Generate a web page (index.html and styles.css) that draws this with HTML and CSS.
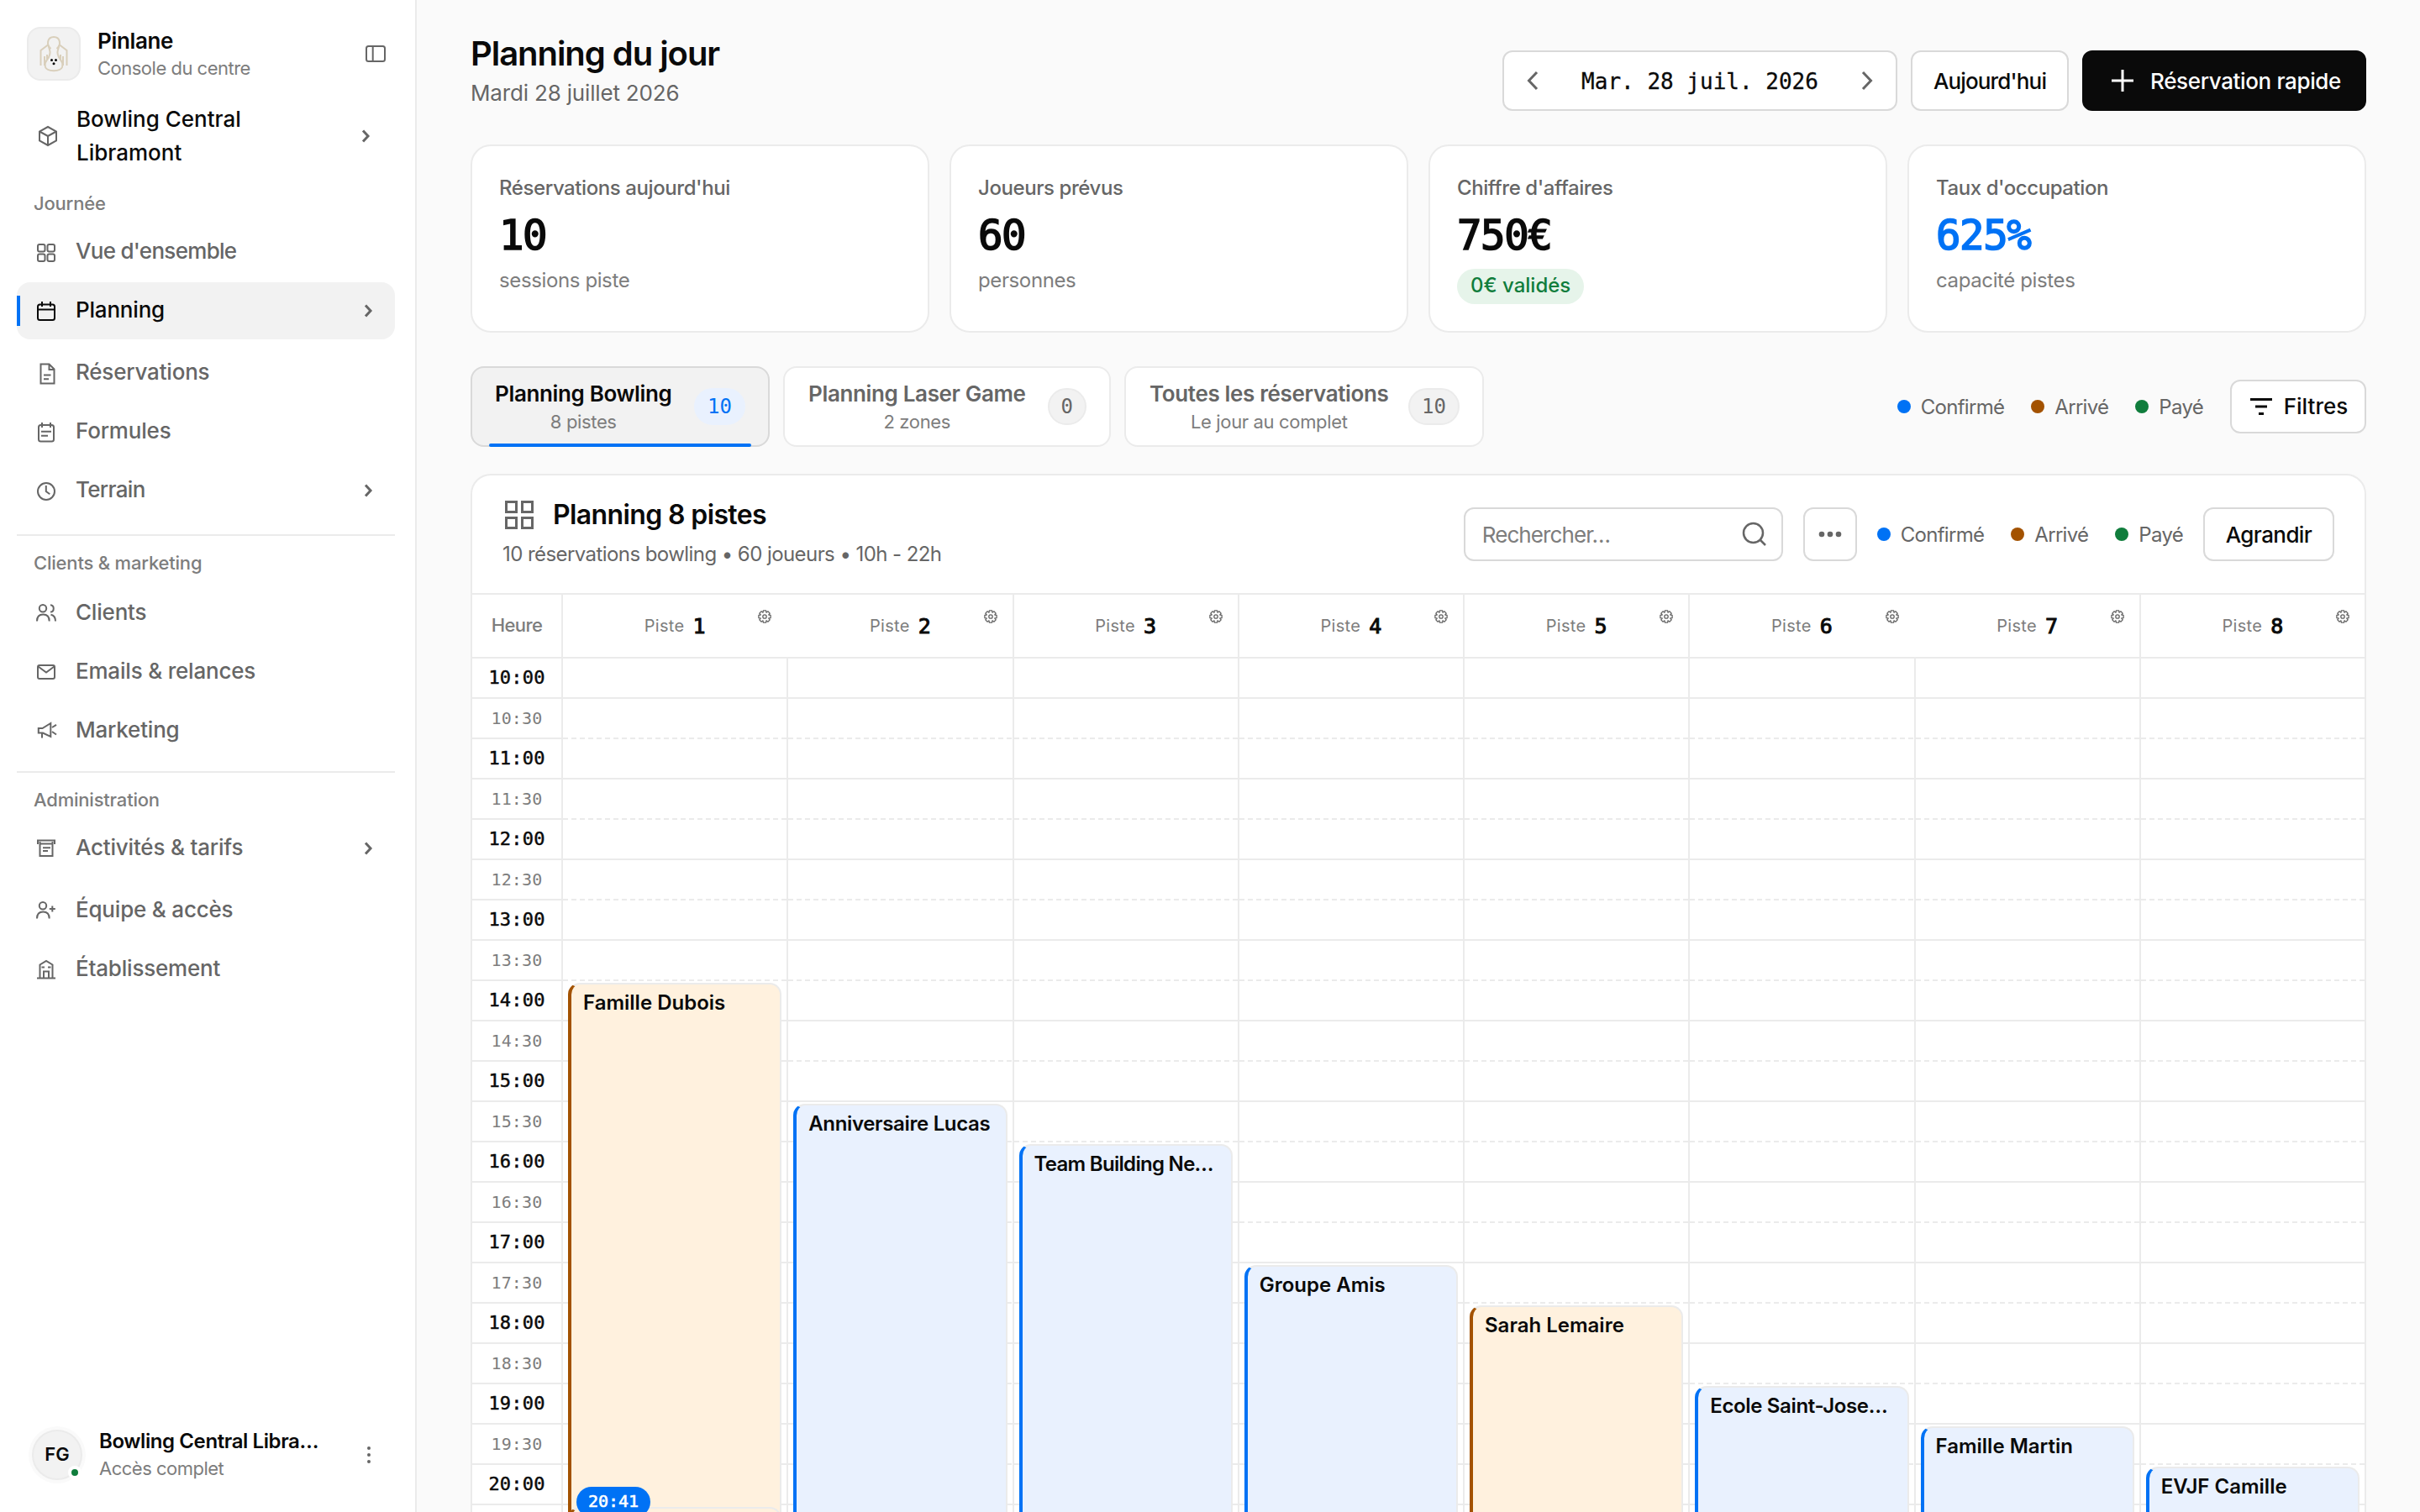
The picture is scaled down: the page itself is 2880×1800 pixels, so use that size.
FILE: index.html
```html
<!DOCTYPE html>
<html lang="fr">
<head>
<meta charset="utf-8">
<title>Pinlane – Planning du jour</title>
<link rel="stylesheet" href="styles.css">
</head>
<body>
<div class="app">
  <aside class="sidebar">
    <div class="brand">
      <div class="brand-logo">
        <svg width="60" height="60" viewBox="34 34 60 60" fill="none" stroke="#d9cfbb" stroke-width="2"><path d="M60.500 58C55 53.500 56 44 64 44S73 53.500 67.500 58"/><path d="M57.500 54C59 60 61 62 58 68 55 73 52.500 75 54 80 56 85.500 72 85.500 74 80 75.500 75 73 73 70 68 67 62 69 60 70.500 54"/><path d="M57 53.500 48.500 60V78M71 53.500 79.500 60V78M53 67V78M75 67V78M56 65V71M72 65V71"/><g fill="#0a0a0a" stroke="none"><circle cx="61.500" cy="71.500" r="1.500"/><circle cx="66.500" cy="71.500" r="1.500"/><circle cx="64" cy="75.800" r="1.500"/></g></svg>
      </div>
      <div class="brand-text"><span class="brand-name">Pinlane</span><span class="brand-sub">Console du centre</span></div>
      <svg class="icon" width="24" height="20" viewBox="0 0 24 20"><rect x="1" y="1" width="22" height="18" rx="2.500"/><path d="M8.700 1V19"/></svg>
    </div>
    <div class="site">
      <svg class="icon" width="24" height="24" viewBox="0 0 24 24"><path d="M12 1 22 6.500V17.500L12 23 2 17.500V6.500ZM2 6.500 12 12 22 6.500M12 12V23"/></svg>
      <span class="site-name">Bowling Central Libramont</span>
      <svg class="chev" width="12" height="18" viewBox="0 0 12 18"><path d="M3 2.500 9 9 3 15.500"/></svg>
    </div>
    <nav class="nav">
      <div class="nav-label">Journée</div>
      <a class="item kern"><svg class="icon" width="24" height="24" viewBox="0 0 24 24"><rect x="2" y="2" width="8.500" height="8.500" rx="2"/><rect x="13.500" y="2" width="8.500" height="8.500" rx="2"/><rect x="2" y="13.500" width="8.500" height="8.500" rx="2"/><rect x="13.500" y="13.500" width="8.500" height="8.500" rx="2"/></svg><span>Vue d'ensemble</span></a>
      <a class="item group active"><svg class="icon" width="24" height="24" viewBox="0 0 24 24"><rect x="2" y="3.500" width="20" height="18.500" rx="2.500"/><path d="M7 0V6M17 0V6M2 9.500H22"/></svg><span>Planning</span><svg class="chev" width="12" height="18" viewBox="0 0 12 18"><path d="M3 2.500 9 9 3 15.500"/></svg></a>
      <a class="item"><svg class="icon" width="24" height="26" viewBox="0 0 24 26"><path d="M5.500 1.500H15.500L21.500 7.500V24.500H5.500ZM15.500 1.500V8H21.500M9 14.500H17.500M9 19.300H15"/></svg><span>Réservations</span></a>
      <a class="item"><svg class="icon" width="24" height="24" viewBox="0 0 24 24"><rect x="3" y="3" width="18" height="19.500" rx="2.500"/><path d="M7 0V6M17 0V6M6 10.700H18M6 15.700H14"/></svg><span>Formules</span></a>
      <a class="item kern"><svg class="icon" width="24" height="24" viewBox="0 0 24 24"><circle cx="12" cy="12" r="10"/><path d="M11.800 5V12L16.300 15.200"/></svg><span>Terrain</span><svg class="chev" width="12" height="18" viewBox="0 0 12 18"><path d="M3 2.500 9 9 3 15.500"/></svg></a>
      <hr>
      <div class="nav-label wide">Clients &amp; marketing</div>
      <a class="item"><svg class="icon" width="24" height="24" viewBox="0 0 24 24"><circle cx="8" cy="5.300" r="4.200"/><path d="M1 20.500C1 15 4 12.500 8.300 12.500S15.700 15 15.700 20.500M17 1.200C22 1.500 22 9.300 17 9.500M17.500 12.800C21 13.500 23 16 23 20.500"/></svg><span>Clients</span></a>
      <a class="item"><svg class="icon" width="24" height="24" viewBox="0 0 24 24"><rect x="2" y="3" width="20" height="16" rx="2"/><path d="M2.500 4.500 12 11.500 21.500 4.500"/></svg><span>Emails &amp; relances</span></a>
      <a class="item last"><svg class="icon" width="24" height="24" viewBox="0 0 24 24"><path d="M17.300 2V18L8 13.500H2.800V8H7.500ZM7 13.500V19.500M19 7 24 3.800M19 12 24 15.500"/></svg><span>Marketing</span></a>
      <hr>
      <div class="nav-label">Administration</div>
      <a class="item group"><svg class="icon" width="24" height="24" viewBox="0 0 24 24"><path d="M2 6V1.500H22V6M4.500 3V20H19.500V3M4.500 5.500H19.500M8 10.300H17M8 14H14"/></svg><span>Activités &amp; tarifs</span><svg class="chev" width="12" height="18" viewBox="0 0 12 18"><path d="M3 2.500 9 9 3 15.500"/></svg></a>
      <a class="item"><svg class="icon" width="24" height="24" viewBox="0 0 24 24"><circle cx="8" cy="5.300" r="4.200"/><path d="M1 20.500C1 15 4 12.500 8.300 12.500S15.700 15 15.700 20.500M19.300 5.500V12.500M15.800 9H22.800"/></svg><span>Équipe &amp; accès</span></a>
      <a class="item"><svg class="icon" width="24" height="24" viewBox="0 0 24 24"><path d="M1 21.500H23M4.500 21V5.500L12 1 19.500 5.500V21M9 21V13.500H15V21M6.500 8.500H10M14 8.500H17.500"/></svg><span>Établissement</span></a>
    </nav>
    <div class="user">
      <div class="avatar"><span>FG</span><i></i></div>
      <div class="user-text"><span class="user-name">Bowling Central Libra…</span><span class="brand-sub">Accès complet</span></div>
      <svg width="6" height="22" viewBox="0 0 6 22" fill="#666"><circle cx="3" cy="3" r="2"/><circle cx="3" cy="11" r="2"/><circle cx="3" cy="19" r="2"/></svg>
    </div>
  </aside>

  <main class="main">
    <header class="top">
      <div class="heading"><h1>Planning du jour</h1><p>Mardi 28 juillet 2026</p></div>
      <div class="actions">
        <div class="btn date"><svg class="arrow" width="14" height="24" viewBox="0 0 14 24"><path d="M12 2 2.500 12 12 22"/></svg><span class="mono">Mar. 28 juil. 2026</span><svg class="arrow" width="14" height="24" viewBox="0 0 14 24"><path d="M2 2 11.500 12 2 22"/></svg></div>
        <button class="btn today">Aujourd'hui</button>
        <button class="btn primary"><svg width="26" height="26" viewBox="0 0 26 26" stroke="#fff" stroke-width="3"><path d="M13 0V26M0 13H26"/></svg><span>Réservation rapide</span></button>
      </div>
    </header>

    <section class="kpis">
      <div class="kpi"><span class="kpi-label">Réservations aujourd'hui</span><b class="mono">10</b><span class="kpi-sub">sessions piste</span></div>
      <div class="kpi"><span class="kpi-label">Joueurs prévus</span><b class="mono">60</b><span class="kpi-sub">personnes</span></div>
      <div class="kpi"><span class="kpi-label">Chiffre d'affaires</span><b class="mono">750€</b><span class="pill">0€ validés</span></div>
      <div class="kpi"><span class="kpi-label">Taux d'occupation</span><b class="mono blue">625%</b><span class="kpi-sub">capacité pistes</span></div>
    </section>

    <section class="tabs">
      <div class="tab on"><div><b>Planning Bowling</b><small>8 pistes</small></div><em class="mono">10</em></div>
      <div class="tab"><div><b>Planning Laser Game</b><small>2 zones</small></div><em class="mono">0</em></div>
      <div class="tab"><div><b>Toutes les réservations</b><small>Le jour au complet</small></div><em class="mono">10</em></div>
      <div class="legend first"><span class="c1">Confirmé</span><span class="c2">Arrivé</span><span class="c3">Payé</span></div>
      <button class="btn small filter"><svg width="26" height="22" viewBox="0 0 26 22" stroke="#0a0a0a" stroke-width="3"><path d="M0 2.500H26M6 11H20M10 19.500H16"/></svg><span>Filtres</span></button>
    </section>

    <section class="board">
      <header class="board-head">
        <div class="board-title">
          <h2><svg width="36" height="36" viewBox="0 0 36 36" fill="none" stroke="#666" stroke-width="3"><rect x="2.500" y="2.500" width="12" height="12"/><rect x="21.500" y="2.500" width="12" height="12"/><rect x="2.500" y="21.500" width="12" height="12"/><rect x="21.500" y="21.500" width="12" height="12"/></svg><span>Planning 8 pistes</span></h2>
          <p>10 réservations bowling • 60 joueurs • 10h - 22h</p>
        </div>
        <div class="btn small search"><span>Rechercher…</span><svg width="30" height="30" viewBox="0 0 30 30" fill="none" stroke="#666" stroke-width="2.500"><circle cx="13.500" cy="13.500" r="11.500"/><path d="M21.500 21.500 28 28"/></svg></div>
        <button class="btn small more"><svg width="28" height="8" viewBox="0 0 28 8" fill="#666"><circle cx="4" cy="4" r="3.300"/><circle cx="14" cy="4" r="3.300"/><circle cx="24" cy="4" r="3.300"/></svg></button>
        <div class="legend"><span class="c1">Confirmé</span><span class="c2">Arrivé</span><span class="c3">Payé</span></div>
        <button class="btn small grow">Agrandir</button>
      </header>
      <div class="lanes-head">
        <div class="hour-title">Heure</div>
        <div class="lane-title open"><span>Piste</span><b class="mono">1</b><svg class="gear" viewBox="0 0 16 16"><use href="#gear"/></svg></div>
        <div class="lane-title"><span>Piste</span><b class="mono">2</b><svg class="gear" viewBox="0 0 16 16"><use href="#gear"/></svg></div>
        <div class="lane-title"><span>Piste</span><b class="mono">3</b><svg class="gear" viewBox="0 0 16 16"><use href="#gear"/></svg></div>
        <div class="lane-title"><span>Piste</span><b class="mono">4</b><svg class="gear" viewBox="0 0 16 16"><use href="#gear"/></svg></div>
        <div class="lane-title"><span>Piste</span><b class="mono">5</b><svg class="gear" viewBox="0 0 16 16"><use href="#gear"/></svg></div>
        <div class="lane-title open"><span>Piste</span><b class="mono">6</b><svg class="gear" viewBox="0 0 16 16"><use href="#gear"/></svg></div>
        <div class="lane-title"><span>Piste</span><b class="mono">7</b><svg class="gear" viewBox="0 0 16 16"><use href="#gear"/></svg></div>
        <div class="lane-title"><span>Piste</span><b class="mono">8</b><svg class="gear" viewBox="0 0 16 16"><use href="#gear"/></svg></div>
      </div>
      <div class="lanes">
        <div class="hours mono">
          <b>10:00</b><i>10:30</i><b>11:00</b><i>11:30</i><b>12:00</b><i>12:30</i><b>13:00</b><i>13:30</i><b>14:00</b><i>14:30</i><b>15:00</b><i>15:30</i><b>16:00</b><i>16:30</i><b>17:00</b><i>17:30</i><b>18:00</b><i>18:30</i><b>19:00</b><i>19:30</i><b>20:00</b>
        </div>
        <div class="lane"><div class="slot at-14 arrived">Famille Dubois</div><div class="slot at-2030 arrived"></div><div class="now mono">20:41</div></div>
        <div class="lane"><div class="slot at-1530 tight">Anniversaire Lucas</div></div>
        <div class="lane"><div class="slot at-16 tighter">Team Building Ne…</div></div>
        <div class="lane"><div class="slot at-1730">Groupe Amis</div></div>
        <div class="lane"><div class="slot at-18 arrived">Sarah Lemaire</div></div>
        <div class="lane"><div class="slot at-19 tight">Ecole Saint-Jose…</div></div>
        <div class="lane"><div class="slot at-1930">Famille Martin</div></div>
        <div class="lane"><div class="slot at-20">EVJF Camille</div></div>
      </div>
    </section>
  </main>
</div>
<svg class="defs" width="0" height="0"><symbol id="gear" viewBox="0 0 16 16"><path d="M6.360 .89H9.640L9.990 3.200 11.870 1.810 14.190 4.130 12.800 6.010 15.110 6.360V9.640L12.800 9.990 14.190 11.870 11.870 14.190 9.990 12.800 9.640 15.110H6.360L6.010 12.800 4.130 14.190 1.810 11.870 3.200 9.990 .89 9.640V6.360L3.200 6.010 1.810 4.130 4.130 1.810 6.010 3.200Z" stroke-linejoin="round"/><circle cx="8" cy="8" r="2.200"/></symbol></svg>
</body>
</html>
```
FILE: styles.css
```css
* { box-sizing: border-box; }
body { margin: 0; background: #fafafa; color: #0a0a0a; font-family: Inter, "Liberation Sans", sans-serif; font-size: 24px; overflow: hidden; }
h1, h2, p { margin: 0; }
button { font: inherit; color: inherit; }
.mono { font-family: "DejaVu Sans Mono", "Liberation Mono", monospace; letter-spacing: 0; }
.defs { position: absolute; }
.app { display: flex; height: 1800px; overflow: hidden; }

.sidebar { width: 496px; flex: none; border-right: 2px solid #ebebeb; background: #fff; display: flex; flex-direction: column; padding: 32px 24px 28px 20px; }
.icon { fill: none; stroke: #666; stroke-width: 2; flex: none; overflow: visible; }
.chev { fill: none; stroke: #666; stroke-width: 3; flex: none; }
.brand { display: flex; align-items: center; height: 64px; padding: 0 11px 0 12px; }
.brand-logo { width: 64px; height: 64px; border: 2px solid #ebebeb; border-radius: 16px; background: #f2f2f2; margin-right: 20px; }
.brand-logo svg { display: block; }
.brand-text, .user-text { display: flex; flex-direction: column; flex: 1; white-space: nowrap; }
.brand-name { font-size: 26px; font-weight: 600; line-height: 34px; letter-spacing: -.35px; }
.brand-sub { font-size: 22px; line-height: 30px; color: #7d7d7d; letter-spacing: -.5px; }
.site { display: flex; align-items: center; height: 80px; margin-top: 26px; padding: 0 29px 0 25px; }
.site-name { font-size: 26px; font-weight: 500; line-height: 40px; flex: 1; padding: 0 88px 0 22px; }
.nav-label { font-size: 22px; font-weight: 500; line-height: 32px; height: 32px; color: #7d7d7d; padding-left: 20px; margin-bottom: 8px; letter-spacing: -.2px; }
.nav-label.wide { margin-bottom: 10px; }
.nav { margin-top: 24px; }
.item { display: flex; align-items: center; height: 68px; margin-bottom: 2px; padding: 2px 26px 0 23px; border-radius: 16px; font-size: 26px; font-weight: 500; color: #666; line-height: 32px; letter-spacing: -.2px; }
.kern { letter-spacing: -.7px; }
.item span { flex: 1; margin: -4px 0 0 23px; }
.item .chev { margin-top: -2px; }
.group { margin-bottom: 6px; }
.active { background: linear-gradient(#0072f5, #0072f5) 0 16px / 4px 36px no-repeat #f2f2f2; color: #0a0a0a; }
.active .icon { stroke: #0a0a0a; }
hr { border: 0; height: 2px; background: #ebebeb; margin: 18px 0 16px; }
.last + hr { margin-top: 14px; }
.user { display: flex; align-items: center; margin-top: auto; height: 80px; padding: 0 28px 0 18px; }
.avatar { width: 60px; height: 60px; border-radius: 50%; border: 2px solid #ebebeb; box-shadow: 0 0 0 4px #fafafa; background: #f2f2f2; font-size: 22px; font-weight: 600; display: flex; align-items: center; justify-content: center; position: relative; margin-right: 20px; }
.avatar span { margin-bottom: 3px; }
.avatar i { position: absolute; right: -1px; bottom: -1px; width: 16px; height: 16px; border-radius: 50%; border: 4px solid #fff; background: #107d3c; }
.user-name { font-size: 24px; font-weight: 600; line-height: 34px; letter-spacing: -.4px; }
.user-text { padding-bottom: 3px; }

.main { flex: 1; padding: 40px 64px 0; min-width: 0; }
.top { display: flex; justify-content: space-between; height: 132px; }
h1 { font-size: 40px; font-weight: 600; line-height: 48px; letter-spacing: -1.050px; }
.heading p { font-size: 26px; line-height: 36px; color: #666; margin-top: 5px; letter-spacing: -.17px; }
.actions { display: flex; gap: 16px; margin-top: 20px; height: 72px; }
.btn { display: flex; align-items: center; justify-content: center; border: 2px solid #d9d9d9; border-radius: 12px; background: #fff; font-size: 26px; font-weight: 500; padding: 0; white-space: nowrap; }
.arrow { fill: none; stroke: #666; stroke-width: 3; }
.date { width: 470px; justify-content: space-between; padding: 0 27px 0 27px; font-weight: 400; }
.date span { -webkit-text-stroke: .3px; padding-top: 2px; }
.today { width: 188px; letter-spacing: -.85px; }
.primary { width: 338px; background: #0a0a0a; border-color: #0a0a0a; color: #fff; gap: 20px; letter-spacing: -.36px; padding-left: 5px; }
.kpis { display: grid; grid-template-columns: repeat(4, 1fr); gap: 24px; }
.kpi { height: 224px; border: 2px solid #ebebeb; border-radius: 24px; background: #fff; padding: 33px 32px 0; display: flex; flex-direction: column; align-items: flex-start; }
.kpi-label { font-weight: 500; line-height: 34px; color: #666; letter-spacing: -.42px; }
.kpi b { font-size: 49px; line-height: 56px; letter-spacing: -1.400px; margin-top: 12px; font-weight: 400; -webkit-text-stroke: 1.700px; }
.kpi-sub { line-height: 32px; color: #7d7d7d; margin-top: 9px; letter-spacing: -.38px; }
.pill { height: 42px; line-height: 40px; border-radius: 21px; background: #e6f4ea; color: #107d3c; font-weight: 500; padding: 0 16px; margin-top: 11px; }
.blue { color: #0072f5; }
.tabs { display: flex; align-items: center; gap: 16px; margin-top: 40px; height: 96px; }
.tab { height: 96px; border: 2px solid #ebebeb; border-radius: 16px; background: #fff; display: flex; align-items: center; justify-content: space-between; width: 390px; padding: 2px 27px 0 28px; color: #666; }
.tab.on { width: 356px; border-color: #d9d9d9; background: #f2f2f2; color: #0a0a0a; position: relative; padding-left: 27px; }
.tab.on::after { content: ""; position: absolute; left: 20px; right: 20px; bottom: -2px; height: 4px; background: #0072f5; border-radius: 2px; }
.tab:nth-child(3) { width: 428px; }
.tab div { display: flex; flex-direction: column; align-items: center; white-space: nowrap; }
.tab b { font-size: 26px; font-weight: 600; line-height: 34px; letter-spacing: -.35px; margin: -1px 0 1px; }
.tab small { font-size: 22px; line-height: 30px; color: #7d7d7d; letter-spacing: -.35px; }
.tab em { font-style: normal; font-size: 24px; height: 44px; line-height: 40px; padding: 0 14px; border: 2px solid #ebebeb; border-radius: 22px; background: #f2f2f2; color: #666; margin-top: -2px; }
.tab.on em { color: #0072f5; background: #e9f1fe; border-color: #e9f1fe; }
.legend { display: flex; gap: 32px; color: #666; letter-spacing: -.7px; }
.legend.first { margin: 0 16px 0 auto; }
.legend span { display: flex; align-items: center; gap: 12px; }
.legend span::before { content: ""; width: 16px; height: 16px; border-radius: 50%; background: #0072f5; }
.legend .c2::before { background: #a35200; }
.legend .c3::before { background: #107d3c; }
.small { height: 64px; flex: none; }
.filter { width: 162px; gap: 14px; padding: 0 0 1px 2px; }
.board { margin-top: 32px; border: 2px solid #ebebeb; border-bottom: 0; border-radius: 24px 24px 0 0; background: #fff; }
.board-head { height: 142px; display: flex; align-items: center; padding: 0 36px; border-bottom: 2px solid #ebebeb; }
.board-title { flex: 1; padding-bottom: 3px; }
h2 { display: flex; align-items: center; gap: 22px; font-size: 32px; font-weight: 600; line-height: 40px; letter-spacing: -.62px; padding-left: 2px; }
.board-title p { line-height: 32px; color: #666; margin-top: 11px; letter-spacing: -.57px; }
.search { width: 380px; justify-content: space-between; padding: 0 17px 0 20px; font-weight: 400; color: #7d7d7d; margin-right: 24px; letter-spacing: -.9px; }
.more { width: 64px; margin-right: 24px; }
.board-head .legend { margin-right: 24px; }
.grow { width: 156px; letter-spacing: -.6px; }
.lanes-head { display: flex; height: 76px; border-bottom: 2px solid #ebebeb; }
.hour-title { width: 108px; flex: none; border-right: 2px solid #ebebeb; font-size: 22px; font-weight: 500; color: #7d7d7d; text-align: center; line-height: 72px; letter-spacing: -.6px; }
.lane-title { flex: 1 1 0; border-right: 2px solid #ebebeb; display: flex; align-items: center; justify-content: center; gap: 10px; position: relative; }
.lane-title span { font-size: 20px; color: #7d7d7d; letter-spacing: .3px; }
.lane-title b { font-size: 25px; font-weight: 400; -webkit-text-stroke: 1px; padding-top: 1px; }
.lane-title.open { border-color: transparent; }
.lane-title:last-child, .lane:last-child { border-right: 0; }
.gear { position: absolute; top: 18px; right: 18px; width: 16px; height: 16px; fill: none; stroke: #666; stroke-width: 1.3; }
.lanes { display: flex; height: 1152px; }
.hours { width: 108px; flex: none; border-right: 2px solid #ebebeb; }
.hours b, .hours i { display: block; height: 48px; border-bottom: 2px solid #ebebeb; text-align: center; line-height: 46px; font-style: normal; letter-spacing: .2px; }
.hours b { font-size: 22px; font-weight: 400; -webkit-text-stroke: .5px; }
.hours i { font-size: 20px; color: #7d7d7d; }
.lane { flex: 1 1 0; min-width: 0; border-right: 2px solid #ebebeb; display: grid; grid-template-rows: repeat(24, 48px); grid-template-columns: minmax(0, 1fr);
  background-image: linear-gradient(transparent 46px, #ebebeb 46px 48px, transparent 48px), conic-gradient(at 6px 94px, transparent 50%, #ebebeb 50% 75%, transparent 75%);
  background-size: 100% 96px, 10px 96px; }
.slot { grid-column: 1; grid-row: 1 / 25; margin: 2px 6px; border: 2px solid #ebebeb; border-left: 4px solid #0072f5; border-radius: 14px 14px 0 0; background: #e9f1fe; padding: 6px 12px 0 14px; font-weight: 600; line-height: 32px; white-space: nowrap; }
.tight { letter-spacing: -.35px; }
.tighter { letter-spacing: -.7px; }
.arrived { background: #fff1de; border-left-color: #a35200; }
.at-14 { grid-row: 9 / 25; } .at-1530 { grid-row: 12 / 25; } .at-16 { grid-row: 13 / 25; } .at-1730 { grid-row: 16 / 25; }
.at-18 { grid-row: 17 / 25; } .at-19 { grid-row: 19 / 25; } .at-1930 { grid-row: 20 / 25; } .at-20 { grid-row: 21 / 25; } .at-2030 { grid-row: 22 / 25; }
.now { grid-column: 1; grid-row: 21 / 23; margin: 26px 0 0 10px; width: 88px; height: 36px; border-radius: 18px; background: #0072f5; color: #fff; font-size: 20px; line-height: 34px; text-align: center; -webkit-text-stroke: .6px; margin-left: 16px; }
```
